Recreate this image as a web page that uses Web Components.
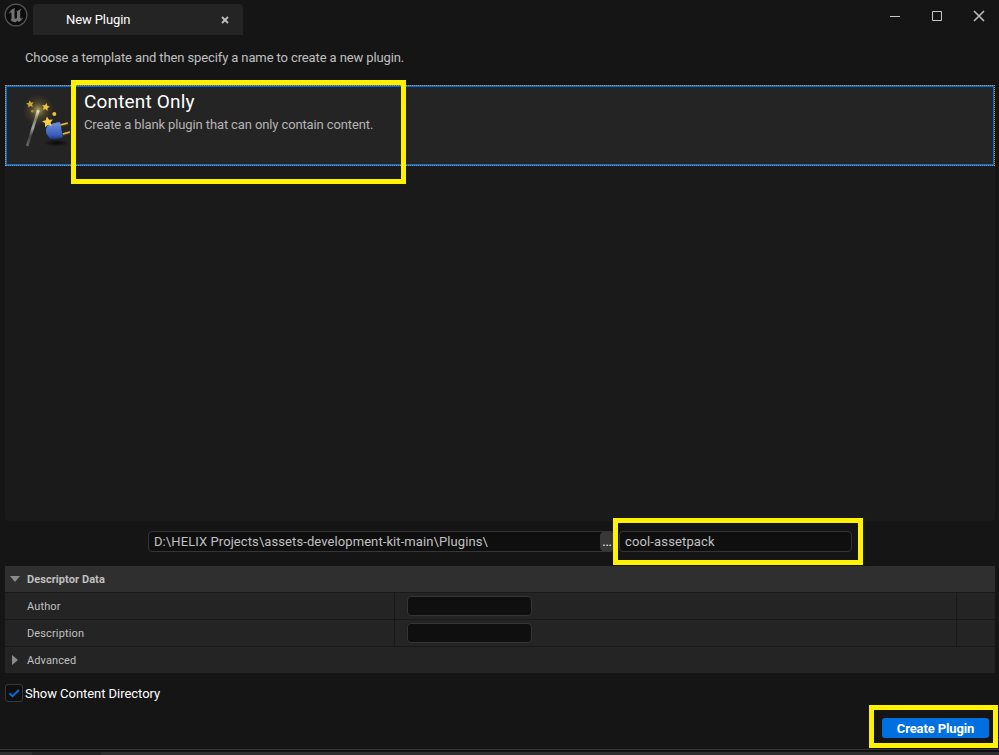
<!DOCTYPE html>
<html lang="en">
<head>
<meta charset="utf-8">
<title>New Plugin</title>
<style>
html,body{margin:0;background:#151515;overflow:hidden}
body{width:999px;height:755px;font-family:Roboto,"Liberation Sans",sans-serif;font-size:13px;color:#c0c0c0}
</style>
</head>
<body>
<plugin-window></plugin-window>
<script>
const define = (name, html) => customElements.define(name, class extends HTMLElement {
  constructor() {
    super();
    const t = document.createElement('template');
    t.innerHTML = html;
    this.attachShadow({mode: 'open'}).append(t.content.cloneNode(true));
  }
});

define('engine-logo', `<style>:host{display:block;width:24px;height:24px}svg{display:block}</style>
<svg width="24" height="24" viewBox="0 0 24 24"><circle cx="12" cy="12" r="10.9" fill="#0c0c0c" stroke="#555" stroke-width="1.2"/>
<path d="M10.6 5.2C7.6 6 5.4 8.3 4.7 11.3c.8-1.2 1.7-1.9 2.3-1.8.5.1.5.6.5 1.2v5.1c0 .8-.5 1.1-1.2 1 1.3 1.7 3.1 2.5 5.4 2.4l1.5-1.5 1.5 1.2c2-1 3.700-2.600 4.500-5-1 1.100-1.800 1.700-2.400 1.600-.4-.1-.6-.4-.6-.9V8.600c0-1 .8-2.200 1.700-2.900-1.800.3-3.300 1.200-4.300 2.500-.4-.4-.8-.5-1.300-.4.5.5.7.9.7 1.500v5.700c-.5.5-1 .8-1.500.8-.7 0-1-.4-1-1.200V7.900c0-1.100.1-1.900.6-2.700z" fill="#737373"/></svg>`);

define('window-tab', `<style>:host{display:flex;box-sizing:border-box;width:210px;height:31px;background:#242424;border-radius:4px 4px 0 0;align-items:center;justify-content:space-between;padding:0 14px 0 33px;color:#fff;letter-spacing:-.1px}svg{display:block}</style>
<slot></slot><svg width="8" height="8" viewBox="0 0 8 8"><path d="M1 1l6 6M7 1L1 7" stroke="#c0c0c0" stroke-width="1.8"/></svg>`);

define('window-controls', `<style>:host{display:flex;gap:30px;padding:10px 14px 0 0}svg{display:block}</style>
<svg width="12" height="12"><path d="M1 6.500h10" stroke="#c8c8c8"/></svg>
<svg width="12" height="12"><path d="M1.500 1.500h9v9h-9z" fill="none" stroke="#c8c8c8"/></svg>
<svg width="12" height="12"><path d="M1 1l10 10M11 1L1 11" stroke="#c0c0c0" stroke-width="1.500"/></svg>`);

define('title-bar', `<style>:host{display:flex;height:35px;align-items:flex-start}engine-logo{margin:3px 5px 0 4px}window-tab{margin-top:4px}window-controls{margin-left:auto}</style>
<engine-logo></engine-logo><window-tab><slot></slot></window-tab><window-controls></window-controls>`);

define('wand-icon', `<style>:host{display:block;width:48px;height:56px;flex:none}svg{display:block}</style>
<svg width="48" height="56" viewBox="0.7 0 48 56"><defs>
<radialGradient id="g"><stop offset="0" stop-color="#d8c468" stop-opacity=".8"/><stop offset=".45" stop-color="#98853c" stop-opacity=".32"/><stop offset="1" stop-color="#665820" stop-opacity="0"/></radialGradient>
<radialGradient id="s"><stop offset="0" stop-color="#080808"/><stop offset="1" stop-color="#080808" stop-opacity="0"/></radialGradient>
<linearGradient id="w" x1="0" y1="0" x2="0" y2="1"><stop offset="0" stop-color="#f4efce"/><stop offset=".25" stop-color="#817e6c"/><stop offset=".5" stop-color="#a5a59a"/><stop offset=".72" stop-color="#40403e"/><stop offset="1" stop-color="#6a6a6a"/></linearGradient>
<linearGradient id="b" x1="0" y1="0" x2="0" y2="1"><stop offset="0" stop-color="#6d91df"/><stop offset=".75" stop-color="#3b5db9"/><stop offset="1" stop-color="#173583"/></linearGradient>
<path id="st" d="M0-4l1.200 2.500 2.800.3-2 1.900.5 2.800L0 2.100-2.500 3.500-2 .7-4-1.200l2.800-.3z"/></defs>
<circle cx="15" cy="15" r="16" fill="url(#g)"/>
<ellipse cx="33" cy="48" rx="13" ry="3.500" fill="url(#s)"/>
<path d="M13.700 15l2.800.8L5 51.500l-2.400-1z" fill="url(#w)"/>
<g fill="#efc23a"><use href="#st" fill="#cfa636" transform="translate(6.800 9) rotate(-8) scale(.95)"/><use href="#st" transform="translate(22.500 12) rotate(12)"/><circle cx="31" cy="19" r="2"/><circle cx="9" cy="16.300" r="1.300" fill="#b89434"/></g>
<path d="M37 30.500l7.500-2M39.500 39.500l7-2" stroke="#4c3a10" stroke-width="3"/><path d="M37 30l7.500-2M39.500 39l7-2" stroke="#e3bd43" stroke-width="1.600"/>
<path d="M24.500 30.500c3-1.500 9-3.500 12.300-3.300L39.500 42c-2.500 1.800-8.500 2.500-12.500 2-1.500-1.500-2-3-3.300-4.500-1.700-2.500-1.200-7 .8-9z" fill="url(#b)"/>
<use href="#st" fill="#fbd044" transform="translate(24.400 27) rotate(-8) scale(1.380)"/></svg>`);

define('template-card', `<style>
:host{display:flex;box-sizing:border-box;height:81px;border:1px dotted #e08a35;padding:0 0 0 18px;box-shadow:inset 0 0 0 1px #0070e0;
background:linear-gradient(#242424,#242424) padding-box,linear-gradient(#3a2a1c,#3a2a1c) right/1px 100% no-repeat border-box,linear-gradient(#0070e0,#0070e0) border-box}
wand-icon{margin:9px 12px 0 0}.t{padding-top:4px;display:flex;flex-direction:column}h1{font-size:19px;letter-spacing:.17px;line-height:24px;font-weight:400;margin:0;color:#fff}p{margin:1px 0 0;line-height:20px;color:#b5b5b5;letter-spacing:-.12px}</style>
<wand-icon></wand-icon><div class="t"><h1><slot name="title"></slot></h1><p><slot></slot></p></div>`);

define('text-box', `<style>:host{display:flex;box-sizing:border-box;height:21px;border:1px solid #353535;border-radius:4px;background:#0f0f0f;align-items:center;padding-left:5px;color:#c0c0c0}</style><slot></slot>`);

define('browse-button', `<style>:host{display:flex;box-sizing:border-box;width:14px;height:19px;background:#383838;border-radius:4px;justify-content:center;align-items:center;color:#fff;letter-spacing:-.3px}</style><slot></slot>`);

define('path-row', `<style>:host{display:flex;height:45px;padding:10px 0 0 148px;box-sizing:border-box}.path{width:467px;justify-content:space-between;letter-spacing:.09px}.name{width:233px;margin-left:4px;letter-spacing:.14px}</style>
<text-box class="path"><slot name="path"></slot><browse-button>...</browse-button></text-box><text-box class="name"><slot name="name"></slot></text-box>`);

define('detail-row', `<style>:host{display:grid;grid-template-columns:389px 1fr 38px;gap:1px;height:26px;font-size:11px;letter-spacing:.13px}
div{background:#242424;display:flex;align-items:center}.label{padding-left:22px}text-box{width:125px;height:20px;margin-left:12px}</style>
<div class="label"><slot></slot></div><div><text-box></text-box></div><div></div>`);

define('detail-heading', `<style>:host{display:flex;align-items:center;height:26px;background:#242424;font-size:11px;letter-spacing:.1px}
:host([open]){background:#2f2f2f;font-weight:700;letter-spacing:.07px}
svg{width:10px;height:10px;margin:0 7px 0 5px;transform:rotate(-90deg)}:host([open]) svg{transform:none}</style>
<svg viewBox="0 0 10 10"><path d="M0 2h10L5 8z" fill="#8b8b8b"/></svg><slot></slot>`);

define('detail-panel', `<style>:host{display:flex;flex-direction:column;gap:1px;margin:0 4px 0 5px;background:#191919}</style><slot></slot>`);

define('check-option', `<style>:host{display:flex;align-items:center;gap:2px;margin:11px 0 0 5px;height:19px;color:#fff;letter-spacing:-.04px}
i{box-sizing:border-box;width:18px;height:18px;border:1px solid #383838;border-radius:3px;background:#0f0f0f;margin-top:-1px}svg{display:block}</style>
<i><svg width="16" height="16" viewBox="0 0 16 16"><path d="M3.500 8.200l3 3L13 5" fill="none" stroke="#0070e0" stroke-width="2"/></svg></i><slot></slot>`);

define('primary-button', `<style>:host{display:flex;width:107px;height:20px;background:#0070e0;border-radius:3px;align-items:center;justify-content:center;color:#fff;font-weight:700;letter-spacing:-.12px}</style><slot></slot>`);

define('status-strip', `<style>:host{display:flex;margin-top:auto;height:6px;box-sizing:border-box;border-top:1px solid #333;padding-top:2px;background:#101010}
b{height:3px;background:#2f2f2f}b:nth-of-type(1){width:32px}b:nth-of-type(2){width:69px;background:#242424}b:nth-of-type(3){flex:1}</style><b></b><b></b><b></b>`);

define('highlight-box', `<style>:host{display:block;box-sizing:border-box;border:5px solid #fff200;position:absolute;pointer-events:none}</style>`);

define('plugin-window', `<style>:host{display:flex;flex-direction:column;position:relative;width:999px;height:755px;background:#151515}
.intro{margin:0 0 0 25px;height:50px;line-height:45px;letter-spacing:-.115px}
.list{margin:0 4px 0 5px;height:436px;background:#1a1a1a;border-radius:0 0 4px 4px}
primary-button{margin:15px 10px 0 auto}
.a{left:71px;top:80px;width:335px;height:104px}.b{left:613px;top:518px;width:250px;height:47px}.c{left:869px;top:705px;width:129px;height:43px}</style>
<title-bar>New Plugin</title-bar>
<div class="intro">Choose a template and then specify a name to create a new plugin.</div>
<div class="list"><template-card><span slot="title">Content Only</span>Create a blank plugin that can only contain content.</template-card></div>
<path-row><span slot="path">D:\\HELIX Projects\\assets-development-kit-main\\Plugins\\</span><span slot="name">cool-assetpack</span></path-row>
<detail-panel><detail-heading open>Descriptor Data</detail-heading><detail-row>Author</detail-row><detail-row>Description</detail-row><detail-heading>Advanced</detail-heading></detail-panel>
<check-option>Show Content Directory</check-option>
<primary-button>Create Plugin</primary-button>
<status-strip></status-strip>
<highlight-box class="a"></highlight-box><highlight-box class="b"></highlight-box><highlight-box class="c"></highlight-box>`);
</script>
</body>
</html>
